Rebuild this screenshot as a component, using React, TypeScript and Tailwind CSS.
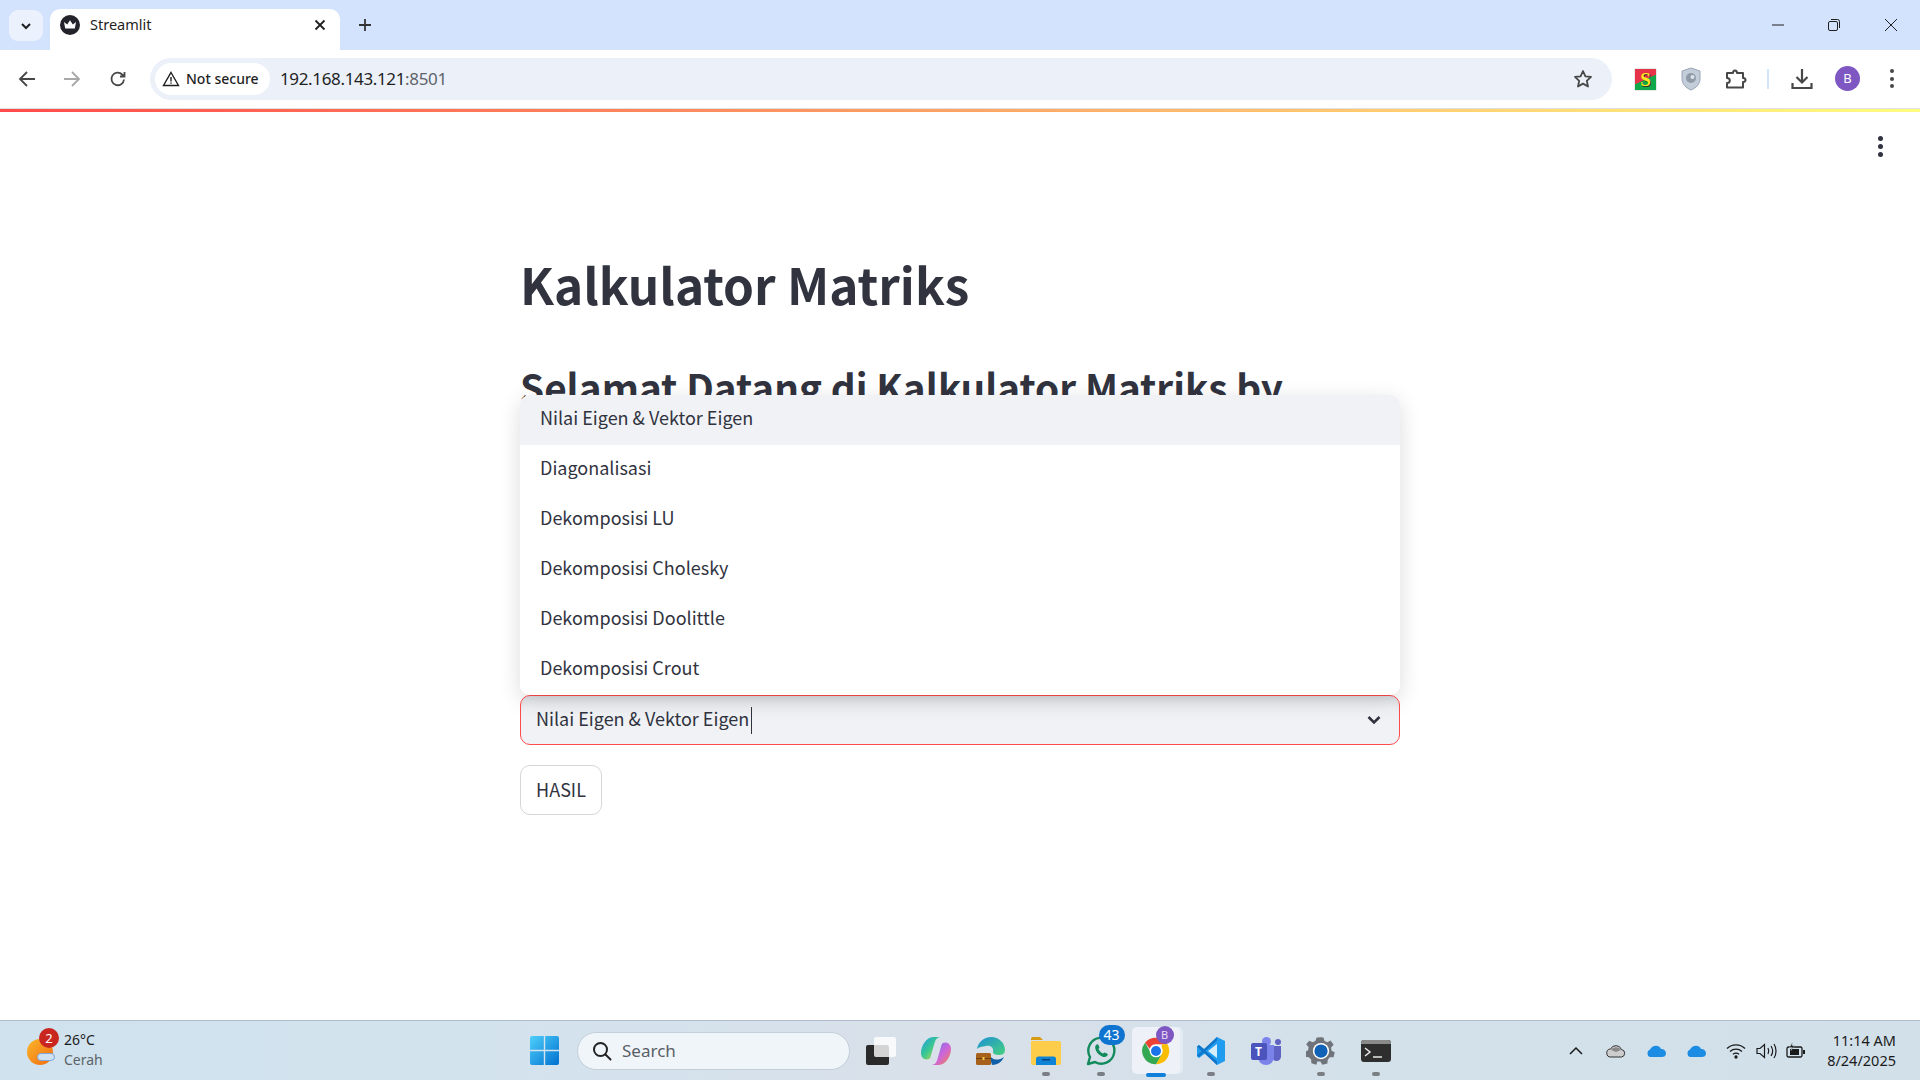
import React from "react";

const OPTIONS = ["Nilai Eigen & Vektor Eigen", "Diagonalisasi", "Dekomposisi LU", "Dekomposisi Cholesky", "Dekomposisi Doolittle", "Dekomposisi Crout"];

function Favicon() {
  return (
    <svg width="20" height="20" viewBox="0 0 20 20">
      <circle cx="10" cy="10" r="10" fill="#23232b" />
      <path d="M4 7l3.2 2.6L10 5.2l2.8 4.4L16 7l-1.2 6.6H5.2z" fill="#fff" />
    </svg>
  );
}

function Chrome({ size = 32 }: { size?: number }) {
  return (
    <svg width={size} height={size} viewBox="0 0 48 48">
      <path d="M24 4a20 20 0 0 1 17.3 10H24a10 10 0 0 0-9.4 6.6L7.6 11.6A20 20 0 0 1 24 4z" fill="#ea4335" />
      <path d="M41.3 14A20 20 0 0 1 24 44l8.6-15a10 10 0 0 0 .1-10l-.1-5z" fill="#fbbc04" />
      <path d="M24 44A20 20 0 0 1 7.6 11.6l8.7 15A10 10 0 0 0 32.6 29z" fill="#34a853" />
      <circle cx="24" cy="24" r="9.5" fill="#fff" />
      <circle cx="24" cy="24" r="7.5" fill="#1a73e8" />
    </svg>
  );
}

function Dot({ active }: { active?: boolean }) {
  return active ? (
    <span className="absolute bottom-[4px] left-1/2 -translate-x-1/2 w-[20px] h-[4px] rounded-full bg-[#0f7fdc]" />
  ) : (
    <span className="absolute bottom-[5px] left-1/2 -translate-x-1/2 w-[8px] h-[4px] rounded-full bg-[#7b7f85]" />
  );
}

function TaskIcon({ children, dot, active }: { children: React.ReactNode; dot?: boolean; active?: boolean }) {
  return (
    <div className="relative w-[55px] h-[60px] flex items-center justify-center shrink-0">
      {active && <div className="absolute left-[4px] top-[6px] w-[48px] h-[47px] rounded-[5px] bg-[#eef2f8] shadow-[3px_0_0_#e4ecf3]" />}
      <div className="relative">{children}</div>
      {dot && <Dot active={active} />}
    </div>
  );
}

export default function App() {
  return (
    <div className="relative w-[1920px] h-[1080px] overflow-hidden bg-white flex flex-col font-['Noto_Sans',sans-serif]">
      {/* tab strip */}
      <div className="h-[50px] bg-[#d3e3fd] flex items-end shrink-0">
        <div className="w-[34px] h-[31px] ml-[9px] mb-[9px] rounded-[9px] bg-[#ebf1fd] flex items-center justify-center">
          <svg width="14" height="14" viewBox="0 0 14 14" fill="none" stroke="#1f1f1f" strokeWidth="2"><path d="M3 5l4 4 4-4" /></svg>
        </div>
        <div className="relative w-[290px] h-[41px] ml-[7px] bg-white rounded-t-[10px] flex items-center pl-[10px] pb-[9px]">
          <span className="flex"><Favicon /></span>
          <span className="ml-[10px] text-[14.5px] text-[#1f1f1f]">Streamlit</span>
          <svg className="absolute left-[264px] top-[10px]" width="12" height="12" viewBox="0 0 12 12" stroke="#1f1f1f" strokeWidth="1.8"><path d="M1.5 1.5l9 9M10.500 1.500l-9 9" /></svg>
        </div>
        <svg className="ml-[18px] mb-[18px]" width="14" height="14" viewBox="0 0 14 14" stroke="#333" strokeWidth="1.8"><path d="M7 1v12M1 7h12" /></svg>
        <div className="ml-auto flex items-center h-[50px]">
          <svg width="14" height="14" viewBox="0 0 14 14" stroke="#1f1f1f" strokeWidth="1"><path d="M1 7h12" /></svg>
          <svg className="ml-[42px]" width="14" height="14" viewBox="0 0 14 14" fill="none" stroke="#1f1f1f" strokeWidth="1"><rect x="1.500" y="3.500" width="9" height="9" rx="1.500" /><path d="M4 1.500h6.500a2 2 0 0 1 2 2V10" /></svg>
          <svg className="ml-[43px] mr-[22px]" width="14" height="14" viewBox="0 0 14 14" stroke="#1f1f1f" strokeWidth="1"><path d="M1 1l12 12M13 1L1 13" /></svg>
        </div>
      </div>

      {/* toolbar */}
      <div className="h-[58px] bg-white rounded-t-[10px] flex items-center shrink-0 relative">
        <svg className="ml-[18px]" width="18" height="18" viewBox="0 0 18 18" fill="none" stroke="#474747" strokeWidth="1.800"><path d="M17 9H2M9 2L2 9l7 7" /></svg>
        <svg className="ml-[27px]" width="18" height="18" viewBox="0 0 18 18" fill="none" stroke="#a8a8a8" strokeWidth="1.800"><path d="M1 9h15M9 2l7 7-7 7" /></svg>
        <svg className="ml-[28px]" width="18" height="18" viewBox="0 0 18 18" fill="none" stroke="#474747" strokeWidth="1.800"><path d="M15 9.500A6.300 6.300 0 1 1 13.200 4.500L15.500 6.500M15.500 2v4.500H11" /></svg>
        <div className="ml-[23px] w-[1462px] h-[42px] rounded-full bg-[#ebf0f9] flex items-center pl-[5px] pr-[18px]">
          <div className="w-[115px] h-[32px] rounded-full bg-white flex items-center pl-[7px]">
            <svg width="18" height="16" viewBox="0 0 18 16" fill="none" stroke="#1f1f1f" strokeWidth="1.400"><path d="M9 1.500L16.500 14.500H1.500z" /><path d="M9 6v4.500M9 11.500v1.300" /></svg>
            <span className="ml-[6px] -mt-[1px] text-[14px] font-medium text-[#1f1f1f] whitespace-nowrap">Not secure</span>
          </div>
          <span className="ml-[10px] text-[17px] text-[#1f1f1f] tracking-[-0.35px]">192.168.143.121<span className="text-[#5f6368]">:8501</span></span>
          <svg className="ml-auto mr-[1px]" width="20" height="20" viewBox="0 0 20 20" fill="none" stroke="#474747" strokeWidth="1.800" strokeLinejoin="round"><path d="M10 2l2.400 5.300 5.600.6-4.200 3.900 1.200 5.700-5-2.900-5 2.900 1.200-5.700L2 7.900l5.600-.6z" /></svg>
        </div>
        {/* extensions */}
        <div className="ml-[23px] relative w-[21px] h-[21px] overflow-hidden flex items-center justify-center shadow-[0_0_1px_#777] bg-[linear-gradient(155deg,#e5344a_0%,#e5344a_49%,#10a84a_51%,#10a84a_100%)]">
          <span className="text-[19px] leading-none font-bold text-[#ffe81a] font-['Liberation_Serif',serif] [text-shadow:1px_1px_0_#333]">S</span>
        </div>
        <svg className="ml-[24px]" width="22" height="24" viewBox="0 0 22 24"><path d="M11 1l9 3v8c0 5-4 9-9 11-5-2-9-6-9-11V4z" fill="#c3ccd9" stroke="#9aa6b6" /><circle cx="11" cy="11" r="5" fill="#8f9aa8" /><circle cx="12.500" cy="10" r="2" fill="#dfe4ea" /></svg>
        <svg className="ml-[23px]" width="22" height="22" viewBox="0 0 22 22" fill="none" stroke="#474747" strokeWidth="2" strokeLinejoin="round"><path d="M2 5h6c0-1.500 1-2.500 2-2.500s2 1 2 2.500h6v5c1.800 0 2.500 1 2.500 2s-.7 2-2.500 2v5.500H2V15c1.800 0 2.800-1 2.800-2.500S3.800 10 2 10z" /></svg>
        <div className="ml-[20px] w-[2px] h-[20px] bg-[#d3e3fd]" />
        <svg className="ml-[22px]" width="22" height="22" viewBox="0 0 22 22" fill="none" stroke="#474747" strokeWidth="2.200"><path d="M11 1v13M5.500 9l5.500 5.500L16.500 9" /><path d="M1.500 15v5h19v-5" /></svg>
        <div className="ml-[22px] -mt-[1px] w-[25px] h-[25px] rounded-full bg-[#7e57c2] flex items-center justify-center text-[13px] text-white">B</div>
        <div className="ml-[30px] -mt-[1px] flex flex-col gap-[3.500px]">
          <span className="w-[4px] h-[4px] rounded-full bg-[#474747]" />
          <span className="w-[4px] h-[4px] rounded-full bg-[#474747]" />
          <span className="w-[4px] h-[4px] rounded-full bg-[#474747]" />
        </div>
      </div>
      <div className="h-px bg-[#e0e0e0] shrink-0" />

      {/* page */}
      <div className="relative flex-1 bg-white font-['Noto_Sans_CJK_SC',sans-serif] text-[#31333f]">
        <div className="h-[3px] bg-[linear-gradient(90deg,#ff4b4b,#fffd80)]" />
        <div className="absolute right-[37px] top-[27px] flex flex-col gap-[3px]">
          <span className="w-[5px] h-[5px] rounded-full bg-[#31333f]" />
          <span className="w-[5px] h-[5px] rounded-full bg-[#31333f]" />
          <span className="w-[5px] h-[5px] rounded-full bg-[#31333f]" />
        </div>
        <div className="w-[880px] mx-auto">
          <h1 className="pt-[133px] text-[49.5px] leading-[78px] font-bold whitespace-nowrap">Kalkulator Matriks</h1>
          <h2 className="mt-[33px] text-[38.7px] leading-[60px] font-bold whitespace-nowrap">Selamat Datang di Kalkulator Matriks by</h2>
          <div className="h-[279px]" />
          <div className="relative">
            <div className="absolute left-0 right-0 bottom-full bg-white rounded-[10px] shadow-[0_6px_22px_rgba(0,0,0,0.14)] overflow-hidden z-10">
              {OPTIONS.map((o, i) => (
                <div key={o} className={`h-[50px] flex items-center pl-[20px] pb-[6px] text-[18px] ${i === 0 ? "bg-[#f0f2f6]" : "bg-white"}`}>{o}</div>
              ))}
            </div>
            <div className="h-[50px] rounded-[10px] border-[1.500px] border-[#ff4b4b] bg-[#f0f2f6] shadow-[inset_0_12px_12px_-10px_rgba(0,0,0,0.12)] flex items-center pl-[15px] pr-[18px] text-[18px]">
              <span className="pb-[3px]">Nilai Eigen &amp; Vektor Eigen</span>
              <span className="ml-[2px] w-px h-[27px] bg-[#31333f]" />
              <svg className="ml-auto" width="14" height="10" viewBox="0 0 14 10" fill="none" stroke="#31333f" strokeWidth="2.600"><path d="M1.500 2l5.500 5.500L12.500 2" /></svg>
            </div>
          </div>
          <button className="mt-[20px] h-[50px] w-[82px] rounded-[10px] border border-[#d5d6d9] bg-white text-[18px] text-[#31333f] flex items-center justify-center pb-[2px]">HASIL</button>
        </div>
      </div>

      {/* taskbar */}
      <div className="h-[60px] shrink-0 flex items-center border-t border-[#aebccb] bg-[linear-gradient(90deg,#cfe2ee_0%,#d3e3ee_25%,#d9e0e9_50%,#d3e1eb_70%,#d2e0ea_100%)]">
        <div className="w-[530px] shrink-0 flex items-center pl-[27px]">
          <div className="relative w-[30px] h-[30px] mt-[2px]">
            <div className="absolute left-0 top-[2px] w-[26px] h-[26px] rounded-full bg-[linear-gradient(135deg,#f9b72a,#f26a12)]" />
            <div className="absolute left-[10px] top-[16px] w-[18px] h-[8px] rounded-full bg-[#cfe0f3] border border-[#7ea6d6]" />
            <div className="absolute left-[12px] -top-[9px] w-[20px] h-[20px] rounded-full bg-[#c8261f] text-white text-[13px] leading-[20px] text-center">2</div>
          </div>
          <div className="ml-[7px] -mt-[2px] flex flex-col text-[14px] leading-[20px]">
            <span className="text-[#1b1b1b]">26°C</span>
            <span className="text-[#5c6268]">Cerah</span>
          </div>
        </div>
        <svg className="shrink-0" width="29" height="29" viewBox="0 0 29 29">
          <defs><linearGradient id="w" x1="0" y1="0" x2="1" y2="1"><stop offset="0" stopColor="#4fd0fb" /><stop offset="1" stopColor="#0070d0" /></linearGradient></defs>
          <path d="M2 0h11.800v13.800H0V2a2 2 0 0 1 2-2zM15.200 0H27a2 2 0 0 1 2 2v11.800H15.200zM0 15.200h13.800V29H2a2 2 0 0 1-2-2zM15.200 15.200H29V27a2 2 0 0 1-2 2H15.200z" fill="url(#w)" />
        </svg>
        <div className="ml-[18px] w-[273px] h-[38px] shrink-0 rounded-full bg-[#f0f5fa] border border-[#c3ced8] flex items-center pl-[14px]">
          <svg width="20" height="20" viewBox="0 0 20 20" fill="none" stroke="#222" strokeWidth="2"><circle cx="8.500" cy="8.500" r="6.500" /><path d="M13.500 13.500L18.500 18.500" strokeLinecap="round" /></svg>
          <span className="ml-[10px] text-[17px] text-[#5a5f66]">Search</span>
        </div>
        <div className="ml-[3px] flex items-center">
          <TaskIcon>
            <div className="relative w-[30px] h-[28px]">
              <div className="absolute left-0 bottom-0 w-[23px] h-[20px] rounded-[2px] bg-[#2a2a2a]" />
              <div className="absolute right-0 top-0 w-[22px] h-[20px] rounded-[2px] bg-white/80" />
            </div>
          </TaskIcon>
          <TaskIcon>
            <svg width="30" height="28" viewBox="0 0 30 28">
              <defs>
                <linearGradient id="c1" x1="0" y1="0" x2="1" y2="1"><stop offset="0" stopColor="#1b9be8" /><stop offset="0.5" stopColor="#3cc98e" /><stop offset="1" stopColor="#f7d534" /></linearGradient>
                <linearGradient id="c2" x1="0" y1="0" x2="1" y2="1"><stop offset="0" stopColor="#6a6ef0" /><stop offset="0.55" stopColor="#cf66d8" /><stop offset="1" stopColor="#f3823a" /></linearGradient>
              </defs>
              <path d="M12 0h7c-3 .5-4.500 2.500-5.500 6l-4 14c-.6 1.800-2 2.500-4 2.500-3.500 0-5.500-3-5.500-6.500C0 9 5.500 0 12 0z" fill="url(#c1)" />
              <path d="M18 28h-7c3-.5 4.500-2.500 5.500-6l4-14c.6-1.800 2-2.500 4-2.500 3.500 0 5.500 3 5.500 6.500C30 19 24.500 28 18 28z" fill="url(#c2)" />
            </svg>
          </TaskIcon>
          <TaskIcon>
            <svg width="30" height="30" viewBox="0 0 30 30">
              <defs><linearGradient id="e1" x1="0" y1="0" x2="1" y2="1"><stop offset="0" stopColor="#1e8fd8" /><stop offset="1" stopColor="#46d27d" /></linearGradient></defs>
              <path d="M1 13C2 6 8 1 15 1c8 0 14 6 14 13 0 4-3 5-6 5-4 0-6-1-6-3 1-5-3-7-7-6-4 .5-7 1-9 3z" fill="url(#e1)" />
              <path d="M13 18c2 5 8 8 15 3-2 5-7 8-12 8z" fill="#0f5ea8" />
              <rect x="0" y="17" width="15" height="12" rx="1.500" fill="#a8611a" />
              <rect x="0" y="22" width="15" height="1" fill="#6e3f12" />
              <rect x="6.500" y="21" width="2" height="3" fill="#f4c74a" />
            </svg>
          </TaskIcon>
          <TaskIcon dot>
            <svg width="30" height="28" viewBox="0 0 30 28">
              <path d="M0 2a2 2 0 0 1 2-2h7l3 3h-12z" fill="#d89a10" />
              <path d="M0 4h28a2 2 0 0 1 2 2v20a2 2 0 0 1-2 2H2a2 2 0 0 1-2-2z" fill="#fbcd4a" />
              <path d="M5 28v-6a2.500 2.500 0 0 1 2.500-2.500h15A2.500 2.500 0 0 1 25 22v6z" fill="#0f84d6" />
              <rect x="11" y="22" width="8" height="1.500" fill="#06427a" />
            </svg>
          </TaskIcon>
          <TaskIcon dot>
            <div className="relative">
              <svg width="30" height="30" viewBox="0 0 30 30" fill="none">
                <path d="M2 28l2-7A13 13 0 1 1 9 26z" stroke="#138a5c" strokeWidth="2.400" strokeLinejoin="round" />
                <path d="M10 9c1-1 2-1 2.500 0l1 2.500-1 1.500c1 2 2.500 3.500 4.500 4.500l1.500-1 2.500 1c1 .5 1 1.500 0 2.500-2 2-5 1-8-1.500S8 11 10 9z" fill="#138a5c" />
              </svg>
              <div className="absolute -top-[11px] left-[13px] w-[26px] h-[20px] rounded-full bg-[#0f74d0] text-white text-[14px] leading-[20px] text-center">43</div>
            </div>
          </TaskIcon>
          <TaskIcon dot active>
            <div className="relative">
              <Chrome size={32} />
              <div className="absolute -top-[9px] left-[16px] w-[18px] h-[18px] rounded-full bg-[#7e57c2] text-[11px] leading-[18px] text-center text-[#e8dcf7]">B</div>
            </div>
          </TaskIcon>
          <TaskIcon dot>
            <svg width="30" height="30" viewBox="0 0 30 30">
              <path d="M21 1l8 4v20l-8 4-12-11.500-6 4.500-2-1.500V10.500L3 9l6 4.500z" fill="#1f9cf0" />
              <path d="M21 8v14l-9-7z" fill="#d6edfb" />
              <path d="M1 10.500L3 9l18 16.500V29z" fill="#0e6fc0" opacity="0.9" />
              <path d="M1 19.500L3 21 21 4.500V1z" fill="#1177c9" />
            </svg>
          </TaskIcon>
          <TaskIcon>
            <div className="relative w-[30px] h-[28px]">
              <span className="absolute right-0 top-[2px] w-[6px] h-[6px] rounded-full bg-[#5f63c4]" />
              <span className="absolute left-[11px] top-0 w-[9px] h-[9px] rounded-full bg-[#7b83eb]" />
              <div className="absolute right-0 top-[9px] w-[9px] h-[15px] rounded-b-[5px] bg-[#5f63c4]" />
              <div className="absolute left-[7px] top-[8px] w-[16px] h-[20px] rounded-b-[8px] bg-[#7b83eb]" />
              <div className="absolute left-0 top-[6px] w-[16px] h-[17px] rounded-[2px] bg-[#4b53bc] text-white text-[12px] leading-[17px] text-center font-bold">T</div>
            </div>
          </TaskIcon>
          <TaskIcon dot>
            <svg width="30" height="30" viewBox="0 0 24 24">
              <path d="M12 1l2 .2.8 2.800 2.300 1 2.600-1.400 2.400 3.400-2 2.200.3 2.500 2.600 1.300-1 4-3 0-1.600 2-.3 3-4 .9-1.600-2.500h-2.500L8.300 22.900l-4-1.100-.2-3-1.800-1.800-2.900-.3-.3-4 2.600-1.400.3-2.500-1.900-2.300L2.600 3.700l2.600 1.300L7.500 4l1-2.800z" fill="#6f747a" />
              <circle cx="12" cy="12" r="6.500" fill="#fff" />
              <circle cx="12" cy="12" r="5.300" fill="#0f62b5" />
            </svg>
          </TaskIcon>
          <TaskIcon dot>
            <div className="w-[30px] h-[22px] rounded-[3px] bg-[#2e2e2e] overflow-hidden relative flex items-center">
              <div className="absolute top-0 left-0 right-0 h-[4px] bg-[#8a8a8a]" />
              <svg className="mt-[4px] ml-[3px]" width="22" height="14" viewBox="0 0 22 14" fill="none" stroke="#e8e8e8" strokeWidth="1.500"><path d="M1 2l5 4-5 4M9 11h9" /></svg>
            </div>
          </TaskIcon>
        </div>
        <div className="ml-auto flex items-center pr-[24px] text-[#1b1b1b]">
          <div className="w-[40px] flex justify-center">
            <svg width="14" height="9" viewBox="0 0 14 9" fill="none" stroke="#1a1a1a" strokeWidth="1.500"><path d="M1 8l6-6 6 6" /></svg>
          </div>
          <div className="w-[40px] flex justify-center">
            <svg width="20" height="14" viewBox="0 0 20 14"><path d="M5 13a4 4 0 0 1-.5-8A6 6 0 0 1 15.500 5.500 3.800 3.800 0 0 1 15.500 13z" fill="#cdcdcd" stroke="#333" /><path d="M5 6a6 6 0 0 1 10 0l-5 2z" fill="#888" /></svg>
          </div>
          <div className="w-[40px] flex justify-center">
            <svg width="20" height="14" viewBox="0 0 20 14"><path d="M4 13a4 4 0 0 1 0-7.500C6 1 13 0 15 5c3 0 5 2 5 4.500S18 13 16 13z" fill="#1b8ce3" /></svg>
          </div>
          <div className="w-[40px] flex justify-center">
            <svg width="20" height="14" viewBox="0 0 20 14"><path d="M4 13a4 4 0 0 1 0-7.500C6 1 13 0 15 5c3 0 5 2 5 4.500S18 13 16 13z" fill="#1b8ce3" /></svg>
          </div>
          <div className="w-[30px] ml-[5px] flex justify-center">
            <svg width="20" height="16" viewBox="0 0 20 16" fill="none" stroke="#1a1a1a" strokeWidth="1.300"><path d="M1 5.500a13 13 0 0 1 18 0M4 8.500a9 9 0 0 1 12 0M7 11.300a5 5 0 0 1 6 0" /><circle cx="10" cy="14" r="1" fill="#1a1a1a" /></svg>
          </div>
          <div className="w-[30px] flex justify-center">
            <svg width="21" height="16" viewBox="0 0 21 16" fill="none" stroke="#1a1a1a" strokeWidth="1.200"><path d="M1 5.500h3L8.500 1.500v13L4 10.500H1zM12 5c1 2 1 4 0 6M15 3c2 3 2 7 0 10M18 1c2.700 4 2.700 10 0 14" /></svg>
          </div>
          <div className="w-[30px] flex justify-center">
            <svg width="20" height="17" viewBox="0 0 20 17"><rect x="1" y="5" width="15" height="10" rx="1.500" fill="none" stroke="#1a1a1a" strokeWidth="1.300" /><path d="M4 7h9v6H4z" fill="#1a1a1a" /><rect x="17" y="8" width="2" height="4" fill="#1a1a1a" /><path d="M6.500 0L3.500 5.500h2.500L5 8.500l3.500-5H6z" fill="#1a1a1a" stroke="#d3e1eb" strokeWidth="0.500" /></svg>
          </div>
          <div className="ml-[15px] w-[70px] -mt-[1px] flex flex-col items-end text-[14.500px] leading-[20px] whitespace-nowrap">
            <span>11:14 AM</span>
            <span>8/24/2025</span>
          </div>
        </div>
      </div>
    </div>
  );
}
